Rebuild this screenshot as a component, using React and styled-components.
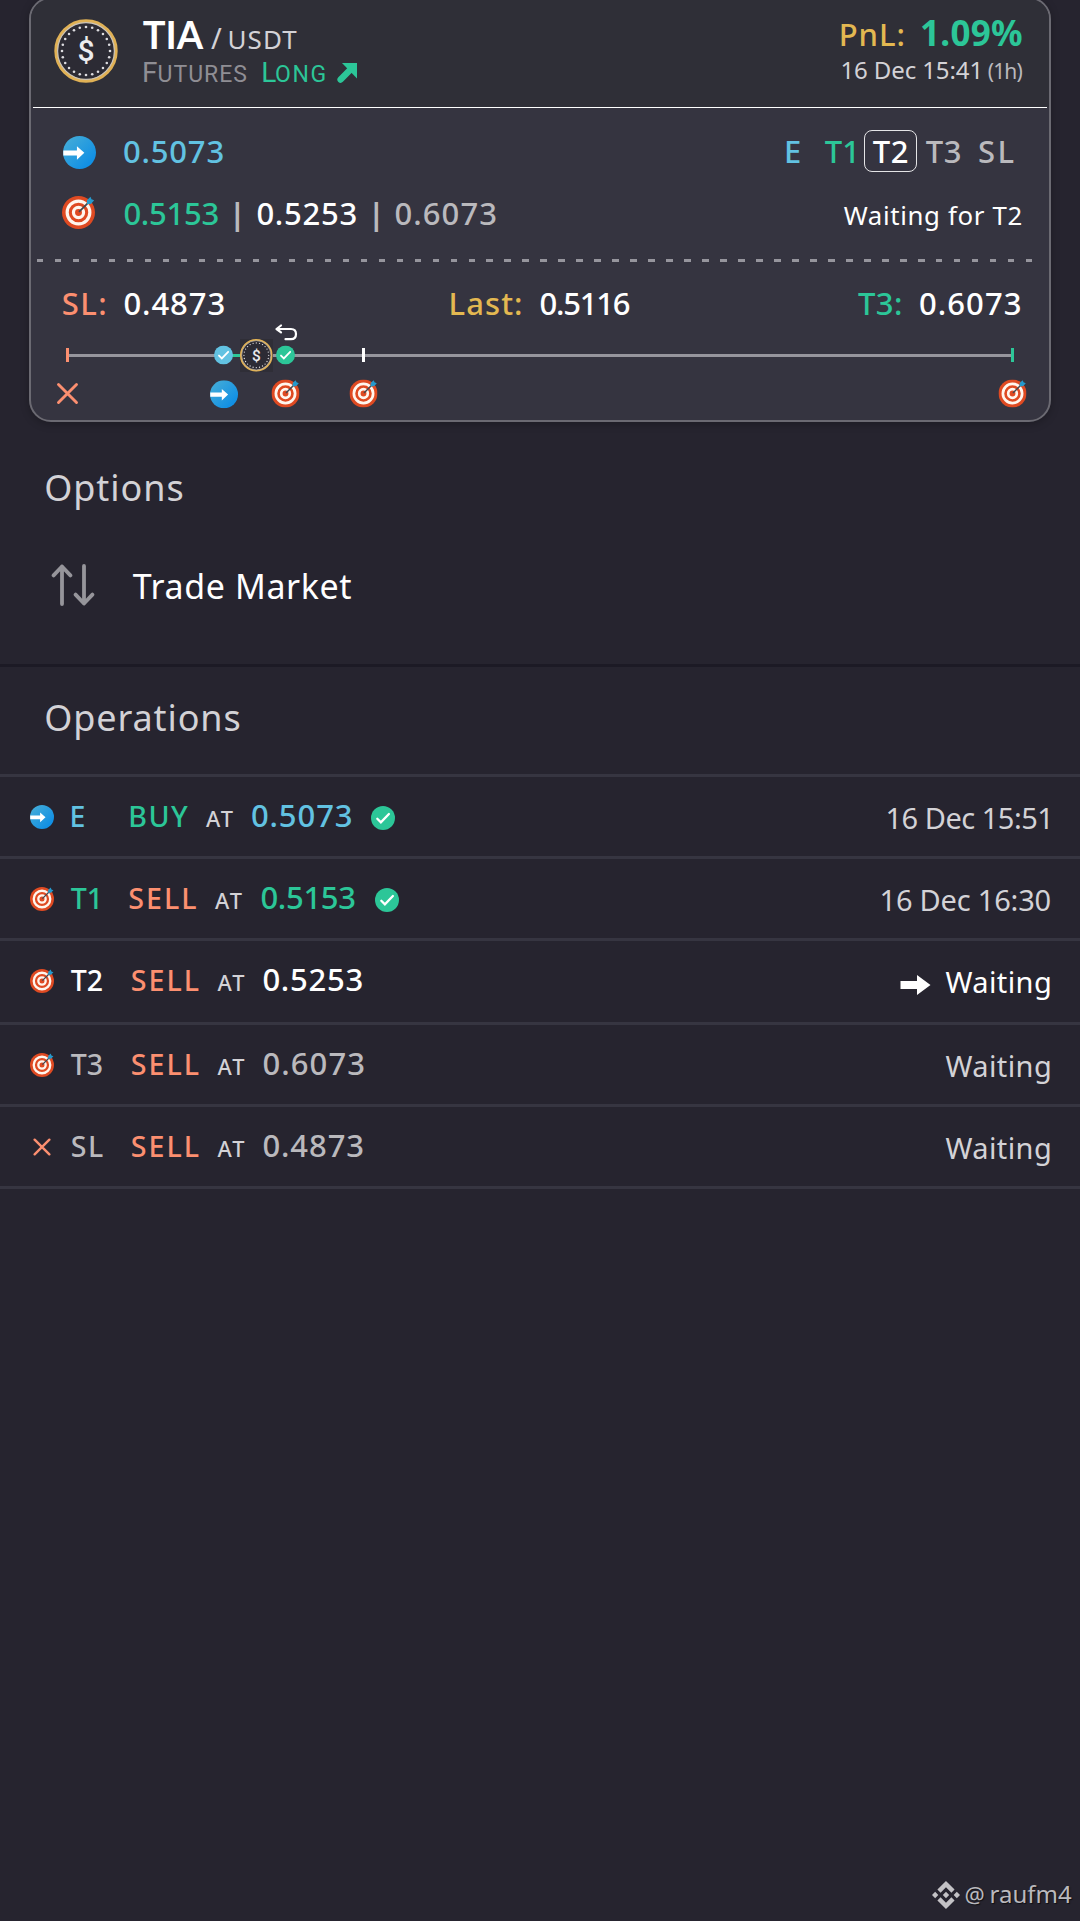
import React from 'react'
import styled, { createGlobalStyle } from 'styled-components'
import { SiBinance } from 'react-icons/si'

const color = {
    white: '#ffffff',
    light: '#d3d2d6',
    grey: '#bab9bd',
    dim: '#8f8e94',
    blue: '#62c2e2',
    green: '#2cc698',
    yellow: '#e3b851',
    orange: '#fc8f70',
}

const GlobalStyle = createGlobalStyle`
body {
    margin: 0;
    background: #26242f;
}`

const Page = styled.div`
display: flex;
flex-direction: column;
width: 1080px;
height: 1921px;
overflow: hidden;
background: #26242f;
font-family: "Noto Sans", sans-serif;`

const Card = styled.div`
box-sizing: border-box;
flex: none;
width: 1022px;
height: 425px;
margin: -3px 0 0 29px;
border: 2px solid #6b6a72;
border-radius: 22px;
background: #353440;
box-shadow: 0 2px 8px rgba(0, 0, 0, 0.25);
overflow: hidden;`

const CardHeader = styled.div`
display: flex;
height: 108px;
background: #2f2f37;`

const HeaderIcon = styled.div`
padding: 20px 0 0 22.5px;
width: 89.5px;`

const HeaderLeft = styled.div`
padding-top: 14.6px;`

const HeaderRight = styled.div`
margin-left: auto;
padding: 14.2px 27px 0 0;`

const HeaderRow = styled.div`
display: flex;
align-items: baseline;
justify-content: ${p => p.$end ? 'flex-end' : 'flex-start'};
height: ${p => p.$h || 40}px;`

const HeaderRule = styled.div`
height: 1px;
margin: 0 2px;
background: #ffffff;`

/* width is the drawn width of the word, so gaps are counted from edge to edge */
const Text = styled.span`
flex: none;
display: block;
width: ${p => p.$w}px;
margin-left: ${p => p.$gap || 0}px;
text-indent: ${p => -(p.$l === undefined ? 0.6 : p.$l)}px;
line-height: 40px;
white-space: nowrap;
font-family: "${p => p.$font || 'Noto Sans'}", sans-serif;
font-size: ${p => p.$size || 31}px;
font-weight: ${p => p.$weight || 500};
letter-spacing: ${p => p.$ls || 0}px;
color: ${p => color[p.$c || 'white']};`

const IconCell = styled.div`
flex: none;
align-self: flex-start;
display: flex;
margin-top: ${p => p.$top || 0}px;
margin-left: ${p => p.$gap || 0}px;`

const InfoRow = styled.div`
display: flex;
align-items: baseline;
box-sizing: border-box;
height: ${p => p.$h}px;
margin-top: ${p => p.$top || 0}px;
padding: 0 ${p => p.$right || 27}px 0 ${p => p.$left || 32}px;`

const Push = styled.div`
display: flex;
align-items: baseline;
margin-left: auto;`

const CurrentStep = styled.div`
box-sizing: border-box;
width: 53px;
height: 42px;
margin-left: 10px;
padding-left: 8px;
border: 1px solid #e4e4e6;
border-radius: 8px;`

const Dashes = styled.div`
height: 3px;
width: 997px;
margin-left: 5.5px;
background: repeating-linear-gradient(90deg, #96959d 0 6.5px, transparent 6.5px 17.98px);`

const TrackSvg = styled.svg`
display: block;`

const SectionTitle = styled.div`
padding: ${p => p.$top}px 0 0 46px;
height: ${p => p.$h}px;`

const MenuItem = styled.div`
display: flex;
align-items: flex-start;
height: 100px;
padding-left: 51px;
border-bottom: 3px solid #1c1a25;`

const Operations = styled.div`
border-top: 3px solid #363541;`

const OperationRow = styled.div`
display: flex;
align-items: flex-start;
height: ${p => p.$h || 79}px;
padding: 0 29px 0 30px;
border-bottom: 3px solid #363541;`

const Order = styled.div`
display: flex;
align-items: baseline;
padding-top: 18px;`

const Status = styled.div`
display: flex;
align-items: baseline;
margin-left: auto;
padding-top: 21px;`

const Watermark = styled.div`
display: flex;
align-items: baseline;
justify-content: flex-end;
height: 47px;
margin-top: auto;
padding-right: 9px;
color: #c3c2c6;
text-shadow: 1px 1px 1px rgba(0, 0, 0, 0.6);`

const dots = Array.from({ length: 24 }, (_, i) => {
    const a = (i * Math.PI) / 12
    return [32 + 24 * Math.sin(a), 32 - 24 * Math.cos(a)]
})

const Coin = ({ size = 64, ...rest }) => (
    <svg width={size} height={size} viewBox="0 0 64 64" {...rest}>
        <circle cx="32" cy="32" r="30" fill="#2c2b34" stroke="#e0b155" strokeWidth="3.4" />
        <circle cx="32" cy="32" r="28.4" fill="none" stroke="#c9c3ba" strokeWidth="1.2" />
        {dots.map(([x, y]) => <circle key={x + '-' + y} cx={x} cy={y} r="1.3" fill="#dddce0" />)}
        <text x="32" y="42.2" textAnchor="middle" fontFamily="Roboto, sans-serif" fontWeight="500" fontSize="30" fill="#ececee">$</text>
    </svg>
)

const Entry = ({ size = 32, id, ...rest }) => (
    <svg width={size} height={size} viewBox="0 0 32 32" {...rest}>
        <defs>
            <linearGradient id={id} x1="0.1" y1="0.1" x2="0.8" y2="0.8">
                <stop offset="0" stopColor="#42abd8" />
                <stop offset="1" stopColor="#1290e4" />
            </linearGradient>
        </defs>
        <circle cx="16" cy="16" r="16" fill={`url(#${id})`} />
        <path d="M0.3 14H13.5V10L20.7 16.3L13.5 23V18.9H0.3Z" fill="#fff" />
    </svg>
)

const Target = ({ size = 32, ...rest }) => (
    <svg width={size} height={size} viewBox="0 0 32 32" {...rest}>
        <circle cx="16" cy="16" r="16" fill="#df4a22" />
        <circle cx="16" cy="16" r="11" fill="none" stroke="#fff6ee" strokeWidth="3.1" />
        <circle cx="16" cy="16" r="4.9" fill="none" stroke="#fff6ee" strokeWidth="3.1" />
        <path d="M16.5 15.5L26 6" stroke="#44484f" strokeWidth="1.7" />
        <path d="M24.2 7.8V4L27.6 0.8L28.6 3.2L31.2 4.2L28 7.8Z" fill="#2499cc" />
    </svg>
)

const Check = ({ size = 24, fill = color.green, ...rest }) => (
    <svg width={size} height={size} viewBox="0 0 24 24" {...rest}>
        <circle cx="12" cy="12" r="12" fill={fill} />
        <path d="M6.3 12.7L9.9 16.4L17.9 8" fill="none" stroke="#fff" strokeWidth="2.3" strokeLinecap="round" />
    </svg>
)

const Cross = ({ size = 22, ...rest }) => (
    <svg width={size} height={size} viewBox="0 0 22 22" {...rest}>
        <path d="M2 2L20 20M20 2L2 20" stroke={color.orange} strokeWidth="2.9" strokeLinecap="round" />
    </svg>
)

const LongArrow = () => (
    <svg width="20" height="20" viewBox="0 0 20 20">
        <path d="M5 0H20V15.5Z" fill={color.green} />
        <path d="M3.6 16.6L13 7" stroke={color.green} strokeWidth="6.4" strokeLinecap="round" />
    </svg>
)

const NextArrow = () => (
    <svg width="31" height="20" viewBox="0 0 31 20">
        <path d="M0.5 6H17V0L30.5 10L17 20V14H0.5Z" fill="#fff" />
    </svg>
)

const SwapIcon = () => (
    <svg width="44" height="42" viewBox="0 0 44 42" fill="none" stroke="#96959b" strokeWidth="3.8" strokeLinecap="round" strokeLinejoin="round">
        <path d="M11 40V2.5M2.6 11.4L11 2.5L19.4 11.4" />
        <path d="M33 2V39.5M24.6 30.6L33 39.5L41.4 30.6" />
    </svg>
)

const Track = () => (
    <TrackSvg width="1018" height="97" viewBox="31 323 1018 97">
        <path d="M68 355.5H1013" stroke="#96959d" strokeWidth="3" />
        <path d="M224 355.5H257" stroke={color.green} strokeWidth="3" />
        <path d="M67.5 348V362" stroke={color.orange} strokeWidth="3" />
        <path d="M363.5 348V362" stroke="#fff" strokeWidth="3" />
        <path d="M1012.5 348V362" stroke={color.green} strokeWidth="3" />
        <Check x="214" y="345.5" size={19} fill={color.blue} />
        <rect x="240" y="339" width="33" height="33" fill="#2f2e37" />
        <Coin x="239.8" y="338.8" size={33} />
        <Check x="276" y="345.5" size={19} />
        <path d="M281 325.5L276.5 329L281 332.3M276.5 329H291C294.5 329 296 331 296 334C296 337.4 294.2 339.2 291 339.2H285.5" fill="none" stroke="#fff" strokeWidth="2.2" strokeLinecap="round" strokeLinejoin="round" />
        <Cross x="56.5" y="382.5" size={22} />
        <Entry x="210" y="380.3" size={28} id="entry-track" />
        <Target x="271.5" y="379.5" size={28} />
        <Target x="349.5" y="379.5" size={28} />
        <Target x="998.5" y="379.5" size={28} />
    </TrackSvg>
)

const operations = [
    { step: 'E', stepW: 15, stepL: 1.5, c: 'blue', side: 'BUY', sideGap: 44.5, sideL: 2.2, sideW: 58, sideLs: 1.5, price: '0.5073', w: 100, ls: 0.9, priceGap: 18, done: 19.5, time: '16 Dec 15:51', timeW: 163, timeLs: -0.5 },
    { step: 'T1', stepW: 28, c: 'green', side: 'SELL', sideGap: 30.5, sideW: 68, sideLs: 2, price: '0.5153', w: 93, ls: -0.3, priceGap: 18.5, done: 20.5, time: '16 Dec 16:30', timeW: 169, timeLs: -0.2 },
    { step: 'T2', stepW: 33, c: 'white', side: 'SELL', sideGap: 28, sideW: 68, sideLs: 2, price: '0.5253', w: 99, ls: 0.73, priceGap: 18, time: 'Waiting', timeW: 105, timeLs: 0.4, active: true, h: 81 },
    { step: 'T3', stepW: 33, c: 'grey', side: 'SELL', sideGap: 28, sideW: 68, sideLs: 2, price: '0.6073', w: 101, ls: 1.1, priceGap: 18, time: 'Waiting', timeW: 105, timeLs: 0.4 },
    { step: 'SL', stepW: 33, stepLs: 1.5, c: 'grey', side: 'SELL', sideGap: 28, sideW: 68, sideLs: 2, price: '0.4873', w: 100, ls: 0.9, priceGap: 18, time: 'Waiting', timeW: 105, timeLs: 0.4 },
]

const Operation = ({ op }) => (
    <OperationRow $h={op.h}>
        <IconCell $top={op.step === 'SL' ? 31 : 28} $gap={op.step === 'SL' ? 3 : 0}>
            {op.step === 'E' && <Entry size={24} id="entry-row" />}
            {op.step[0] === 'T' && <Target size={24} />}
            {op.step === 'SL' && <Cross size={18} />}
        </IconCell>
        <Order>
            <Text $size={28.5} $w={op.stepW} $gap={op.step === 'SL' ? 20 : 17} $l={op.stepL === undefined ? 0.2 : op.stepL} $ls={op.stepLs} $c={op.c}>{op.step}</Text>
            <Text $size={28.6} $w={op.sideW} $gap={op.sideGap} $l={op.sideL || 1.2} $ls={op.sideLs} $c={op.side === 'BUY' ? 'green' : 'orange'}>{op.side}</Text>
            <Text $size={21.8} $w={27.5} $gap={17.5} $l={0} $ls={2} $c="light">AT</Text>
            <Text $w={op.w} $gap={op.priceGap} $ls={op.ls} $c={op.c}>{op.price}</Text>
        </Order>
        {op.done && <IconCell $top={29} $gap={op.done}><Check size={24} /></IconCell>}
        <Status>
            {op.active && <IconCell $top={13}><NextArrow /></IconCell>}
            <Text $size={29} $weight={400} $w={op.timeW} $gap={op.active ? 15 : 0} $l={op.time === 'Waiting' ? 0.5 : 2.5} $ls={op.timeLs} $c={op.active ? 'white' : 'light'}>{op.time}</Text>
        </Status>
    </OperationRow>
)

function App() {
    return (
        <Page>
            <GlobalStyle />
            <Card>
                <CardHeader>
                    <HeaderIcon><Coin /></HeaderIcon>
                    <HeaderLeft>
                        <HeaderRow $h={39}>
                            <Text $font="Lato" $size={38} $weight={700} $w={59} $l={0.3}>TIA</Text>
                            <Text $size={29} $weight={400} $w={8} $gap={10} $l={1} $c="light">/</Text>
                            <Text $size={26} $weight={400} $w={68} $gap={9} $l={1.6} $ls={1.1} $c="light">USDT</Text>
                        </HeaderRow>
                        <HeaderRow>
                            <Text $font="Roboto" $size={28} $weight={400} $w={14} $l={1} $c="dim">F</Text>
                            <Text $font="Roboto" $size={23} $weight={400} $w={89} $gap={1} $l={0.5} $ls={1} $c="dim">UTURES</Text>
                            <Text $font="Roboto" $size={28} $weight={400} $w={13} $gap={15.5} $l={1.3} $c="green">L</Text>
                            <Text $font="Roboto" $size={23} $weight={400} $w={49} $gap={0.5} $l={1} $ls={1.6} $c="green">ONG</Text>
                            <IconCell $top={10.4} $gap={12}><LongArrow /></IconCell>
                        </HeaderRow>
                    </HeaderLeft>
                    <HeaderRight>
                        <HeaderRow $h={37} $end>
                            <Text $w={63} $l={2.2} $ls={0.9} $c="yellow">PnL:</Text>
                            <Text $size={35} $weight={700} $w={100} $gap={18} $l={2} $ls={0.3} $c="green">1.09%</Text>
                        </HeaderRow>
                        <HeaderRow $end>
                            <Text $size={24} $weight={400} $w={136} $l={1.6} $ls={-0.1} $c="light">16 Dec 15:41</Text>
                            <Text $size={21} $weight={400} $w={34} $gap={10} $l={0.2} $ls={-0.9} $c="grey">(1h)</Text>
                        </HeaderRow>
                    </HeaderRight>
                </CardHeader>
                <HeaderRule />
                <InfoRow $top={22} $h={62.7} $right={35}>
                    <IconCell $top={6}><Entry size={33} id="entry-main" /></IconCell>
                    <Text $w={100} $gap={27.5} $ls={0.83} $c="blue">0.5073</Text>
                    <Push>
                        <Text $w={15} $l={2} $c="blue">E</Text>
                        <Text $w={29} $gap={24} $l={0.2} $c="green">T1</Text>
                        <CurrentStep><Text $w={35} $l={0.3} $ls={0.5}>T2</Text></CurrentStep>
                        <Text $w={35} $gap={9} $l={0.3} $ls={0.5} $c="grey">T3</Text>
                        <Text $w={35} $gap={18} $l={1} $ls={2.4} $c="grey">SL</Text>
                    </Push>
                </InfoRow>
                <InfoRow $h={66.3} $left={31}>
                    <IconCell $top={3.3}><Target size={33} /></IconCell>
                    <Text $w={94} $gap={29} $ls={-0.27} $c="green">0.5153</Text>
                    <Text $w={4} $gap={17} $l={6.3} $c="grey" $weight={700}>|</Text>
                    <Text $w={99} $gap={18} $ls={0.73}>0.5253</Text>
                    <Text $w={4} $gap={18} $l={6.3} $c="grey" $weight={700}>|</Text>
                    <Text $w={101} $gap={17} $ls={1.1} $c="grey">0.6073</Text>
                    <Push>
                        <Text $size={25.8} $weight={400} $w={178} $l={0.3} $ls={0.65}>Waiting for T2</Text>
                    </Push>
                </InfoRow>
                <Dashes />
                <InfoRow $top={21.3} $h={39.7} $right={28.5}>
                    <Text $w={43} $l={1.3} $ls={1.5} $c="orange">SL:</Text>
                    <Text $w={100} $gap={18} $ls={0.93}>0.4873</Text>
                    <Text $w={71} $gap={227} $l={2.5} $ls={1.1} $c="yellow">Last:</Text>
                    <Text $w={89} $gap={18} $ls={-1.2}>0.5116</Text>
                    <Push>
                        <Text $w={43} $l={0.5} $ls={0.4} $c="green">T3:</Text>
                        <Text $w={101} $gap={18} $ls={1.1}>0.6073</Text>
                    </Push>
                </InfoRow>
                <Track />
            </Card>

            <SectionTitle $top={46} $h={96}>
                <Text $size={36} $weight={400} $w={136} $l={1.8} $ls={0.95} $c="light">Options</Text>
            </SectionTitle>
            <MenuItem>
                <IconCell><SwapIcon /></IconCell>
                <IconCell $top={1.5} $gap={38}>
                    <Text $size={34} $weight={400} $w={218} $l={0.2} $ls={0.6}>Trade Market</Text>
                </IconCell>
            </MenuItem>

            <SectionTitle $top={31} $h={76}>
                <Text $size={36} $weight={400} $w={193} $l={1.8} $ls={0.9} $c="light">Operations</Text>
            </SectionTitle>
            <Operations>
                {operations.map(op => <Operation key={op.step} op={op} />)}
            </Operations>

            <Watermark>
                <IconCell $top={6.5}><SiBinance size={28} color="#c3c2c6" /></IconCell>
                <Text $size={22.5} $weight={400} $w={20} $gap={5} $c="grey">@</Text>
                <Text $size={24} $weight={400} $w={80} $gap={6} $l={1.5} $c="grey">raufm4</Text>
            </Watermark>
        </Page>
    )
}

export default App
